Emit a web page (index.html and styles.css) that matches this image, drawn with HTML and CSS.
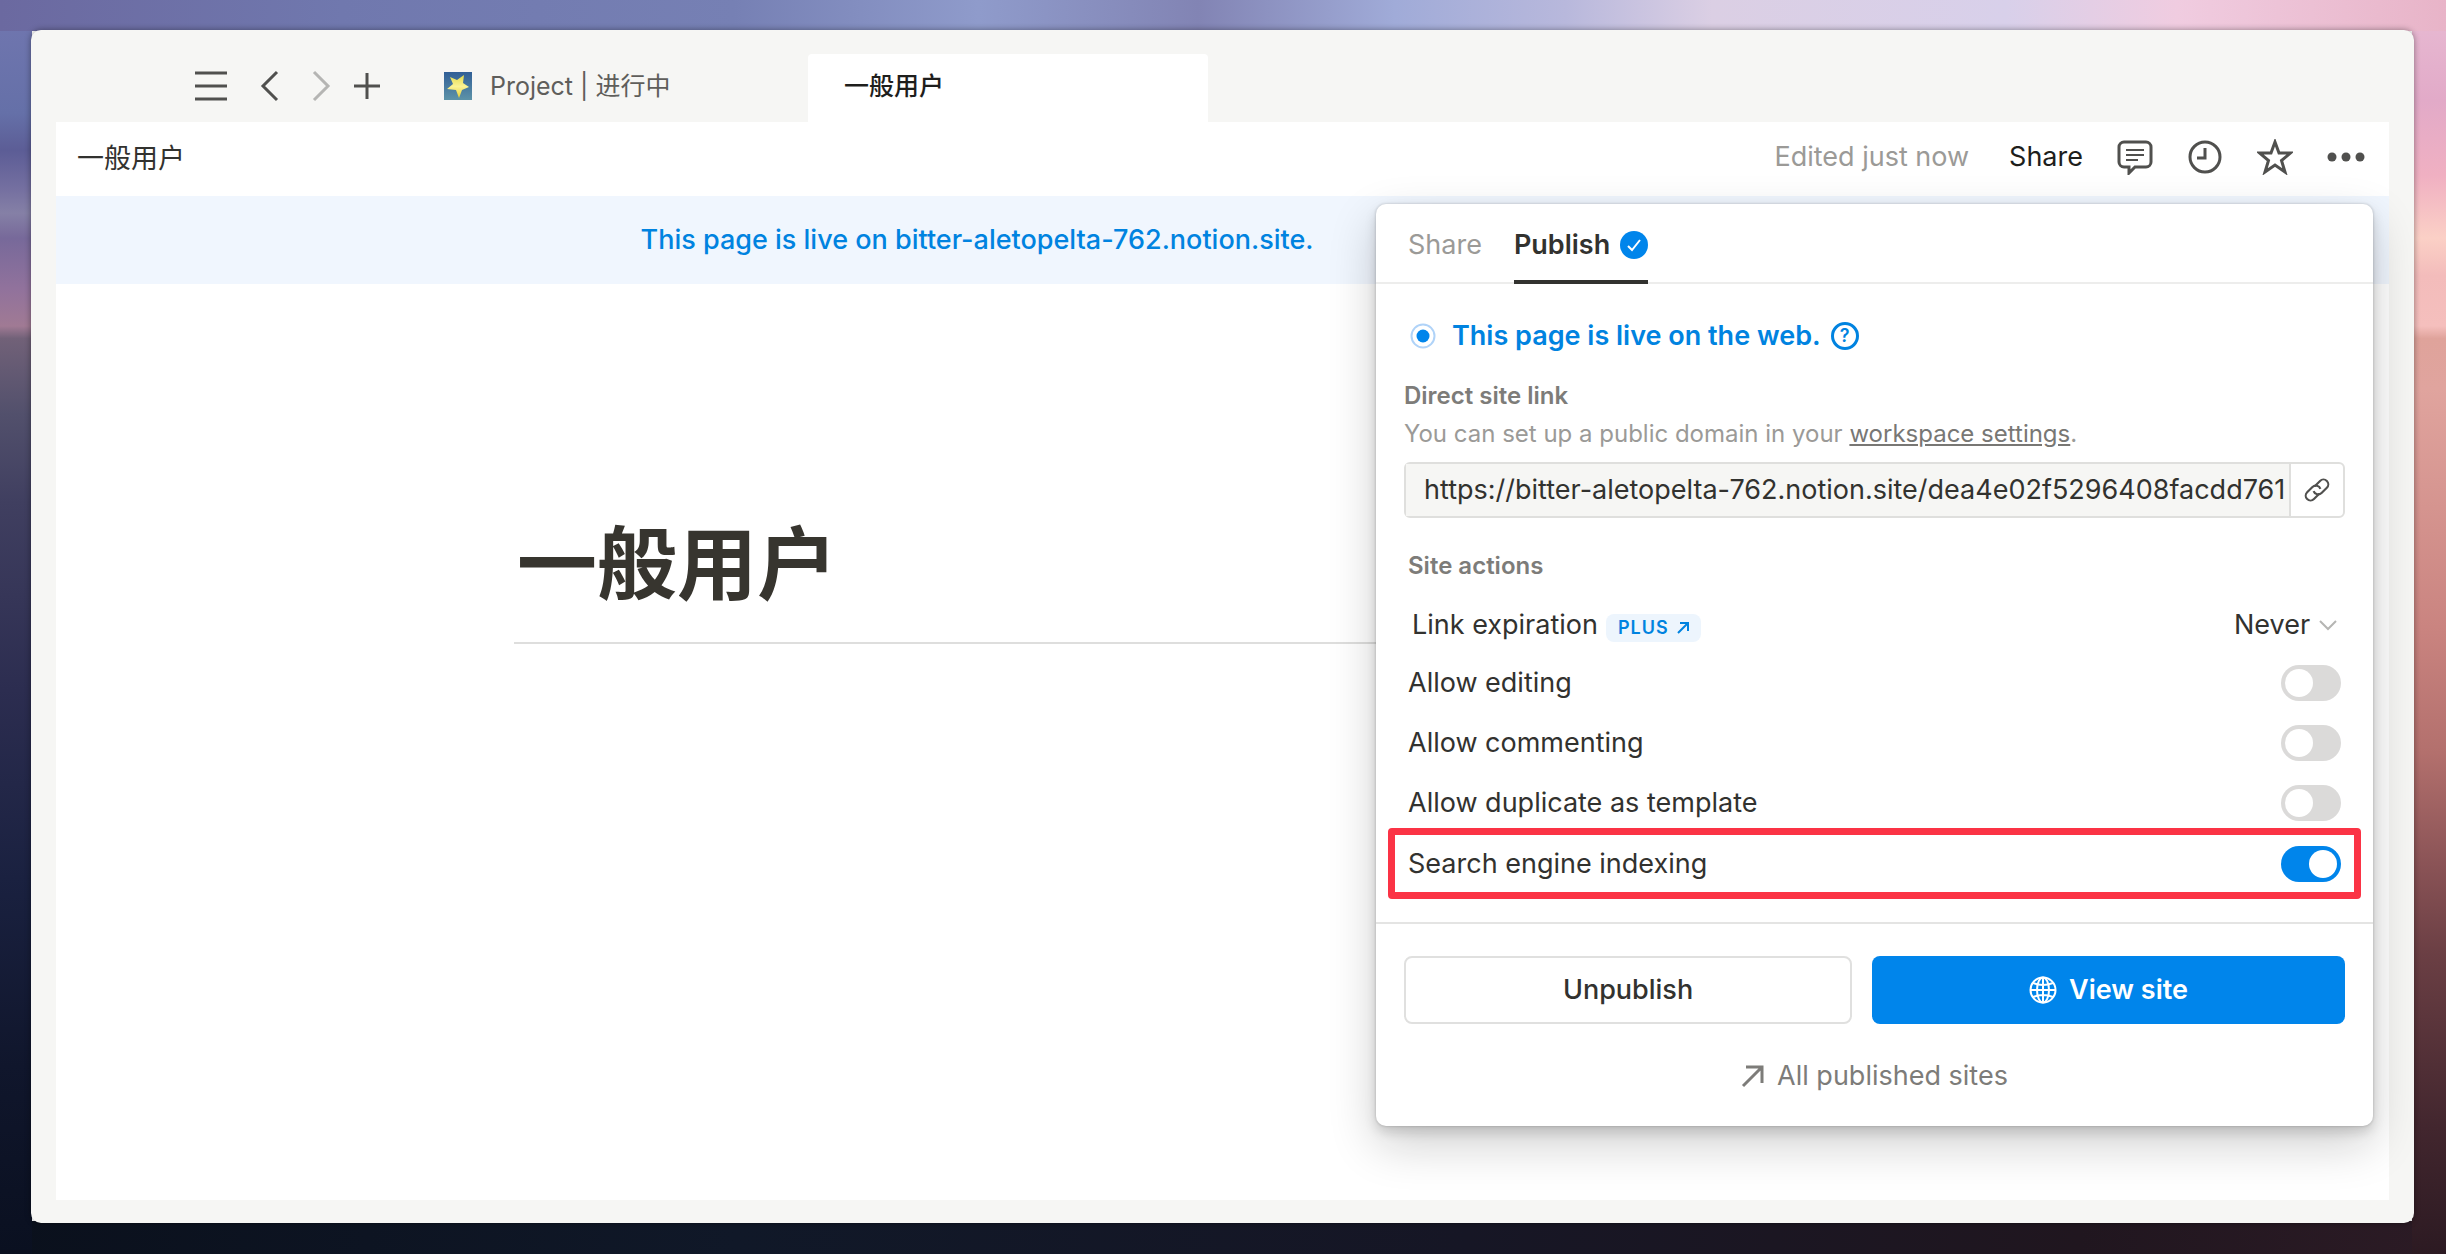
FILE: index.html
```html
<!DOCTYPE html>
<html lang="zh">
	<head>
		<title>一般用户</title>
		<meta charset="utf-8">
		<link rel="stylesheet" href="styles.css">
	</head>
	<body>
		<div class="window">
			<div class="topbar">
				<div class="nav">
					<button class="icon" aria-label="Menu"><svg width="36" height="36" viewBox="0 0 36 36"><path d="M2 5h32M2 18h32M2 31h32"/></svg></button>
					<button class="icon" aria-label="Back"><svg width="20" height="36" viewBox="0 0 20 36"><path d="M17 4L3 18l14 14"/></svg></button>
					<button class="icon off" aria-label="Forward"><svg width="20" height="36" viewBox="0 0 20 36"><path d="M3 4l14 14L3 32"/></svg></button>
					<button class="icon plusicon" aria-label="New tab"><svg width="28" height="36" viewBox="0 0 28 36"><path d="M1 18h26M14 5v26"/></svg></button>
				</div>
				<a class="tab" href="#">
					<svg width="28" height="28" viewBox="0 0 28 28">
						<defs>
							<linearGradient id="sky" x1="0" y1="0" x2="0" y2="1"><stop offset="0" stop-color="#315f96"/><stop offset="1" stop-color="#5d93a8"/></linearGradient>
							<linearGradient id="gold" x1="0" y1="0" x2="0" y2="1"><stop offset="0" stop-color="#e2d94c"/><stop offset=".5" stop-color="#fbf394"/><stop offset="1" stop-color="#e6cf35"/></linearGradient>
						</defs>
						<rect width="28" height="28" fill="url(#sky)"/>
						<path d="M20 3l-1 8 6 4-7 3-3 8-3-8-9-1 6-5-3-7 7 3z" fill="url(#gold)"/>
					</svg>
					Project | 进行中
				</a>
				<a class="tab current" href="#">一般用户</a>
			</div>
			<div class="page">
				<div class="header">
					<a class="crumb" href="#">一般用户</a>
					<span class="edited">Edited just now</span>
					<button class="share">Share</button>
					<button class="icon" aria-label="Comments"><svg width="36" height="36" viewBox="0 0 36 36"><path d="M7 3h22a5 5 0 0 1 5 5v15a5 5 0 0 1-5 5H18l-6 6v-6H7a5 5 0 0 1-5-5V8a5 5 0 0 1 5-5z"/><path class="thin" d="M9 11h18M9 16h18M9 21h12"/></svg></button>
					<button class="icon" aria-label="Updates"><svg width="36" height="36" viewBox="0 0 36 36"><circle cx="18" cy="18" r="15"/><path d="M18 9v10h-8"/></svg></button>
					<button class="icon" aria-label="Favorite"><svg width="36" height="36" viewBox="0 0 36 36"><path d="M18 3l4 11h11.500l-9 7.500 3.500 11.500-10-7-10 7 3.500-11.500-9-7.500H14z"/></svg></button>
					<button class="icon" aria-label="More"><svg width="38" height="36" viewBox="0 0 38 36"><g class="fill"><circle cx="5" cy="18" r="4.500"/><circle cx="19" cy="18" r="4.500"/><circle cx="33" cy="18" r="4.500"/></g></svg></button>
				</div>
				<div class="banner"><a href="#">This page is live on bitter-aletopelta-762.notion.site.</a></div>
				<div class="content">
					<h1>一般用户</h1>
				</div>

				<div class="popup">
					<div class="ptabs">
						<button class="ptab">Share</button>
						<button class="ptab active">Publish
							<svg width="28" height="28" viewBox="0 0 28 28"><circle cx="14" cy="14" r="14" fill="#0085eb"/><path d="M8 15l4 4 8-10" fill="none" stroke="#fff" stroke-width="2"/></svg>
						</button>
					</div>
					<div class="body">
						<div class="live">
							<svg width="26" height="26" viewBox="0 0 26 26"><circle cx="13" cy="13" r="11.500" fill="#fff" stroke="#b0d3f8" stroke-width="2"/><circle cx="13" cy="13" r="6.500" fill="#0085eb"/></svg>
							<span>This page is live on the web.</span>
							<button class="help" aria-label="Help">?</button>
						</div>
						<label class="small" for="url">Direct site link</label>
						<p class="note">You can set up a public domain in your <a href="#">workspace settings</a>.</p>
						<div class="link">
							<input id="url" type="text" readonly value="https://bitter-aletopelta-762.notion.site/dea4e02f5296408facdd761">
							<button aria-label="Copy link"><svg width="30" height="30" viewBox="0 0 28 28"><g transform="rotate(-45 14 14)"><path d="M13 18H6a4.500 4.500 0 0 1 0-9h7a4.500 4.500 0 0 1 4 6.500"/><path d="M15 10h7a4.500 4.500 0 0 1 0 9h-7a4.500 4.500 0 0 1-4-6.500"/></g></svg></button>
						</div>
						<h2 class="small">Site actions</h2>
						<div class="row expire">
							<label for="exp">Link expiration</label>
							<a class="plus" href="#">PLUS <svg width="12" height="12" viewBox="0 0 12 12"><path d="M1 11L11 1M3 1h8v8"/></svg></a>
							<select id="exp"><option>Never</option></select>
							<svg class="down" width="18" height="12" viewBox="0 0 18 12"><path d="M1 2l8 8 8-8"/></svg>
						</div>
						<div class="row"><label for="edit">Allow editing</label><input id="edit" class="switch" type="checkbox"></div>
						<div class="row"><label for="comment">Allow commenting</label><input id="comment" class="switch" type="checkbox"></div>
						<div class="row"><label for="dup">Allow duplicate as template</label><input id="dup" class="switch" type="checkbox"></div>
						<div class="row marked"><label for="seo">Search engine indexing</label><input id="seo" class="switch" type="checkbox" checked></div>
					</div>
					<div class="foot">
						<div class="buttons">
							<button class="btn">Unpublish</button>
							<button class="btn view">
								<svg width="28" height="28" viewBox="0 0 28 28"><circle cx="14" cy="14" r="12.500"/><ellipse cx="14" cy="14" rx="6" ry="12.500"/><path d="M14 1.500v25M1.500 14h25M4 7q10 4 20 0M4 21q10-4 20 0"/></svg>
								View site
							</button>
						</div>
						<a class="all" href="#"><svg width="24" height="24" viewBox="0 0 24 24"><path d="M2 22L21 3M5 3h16v16"/></svg>All published sites</a>
					</div>
				</div>
			</div>
		</div>
	</body>
</html>
```
FILE: styles.css
```css
* {
	box-sizing: border-box;
}
body {
	margin: 0;
	min-height: 100vh;
	padding: 30px 32px 31px 31px;
	display: flex;
	font-family: Inter, "Noto Sans CJK SC", sans-serif;
	font-size: 27px;
	line-height: 36px;
	color: #32322f;
	background:
		linear-gradient(90deg, #6b69a0, #7078ae 14%, #7680b4 30%, #8f9bcb 40%, #8284b4 49%, #a0abd8 57%, #b8b8dc 64%, #dbcfe4 70%, #d8d0ea 82%, #f0cce0 89%, #e8b4c8) no-repeat 0 0 / 100% 31px,
		linear-gradient(#7277b0, #6570a8 9%, #5c5d96 12%, #746fa0 15%, #8580a6 17%, #77699a 19%, #91729c 23%, #a07a94 26%, #716178 27%, #52506c 33%, #403f60 40%, #2c2d50 55%, #1a2140 70%, #10162c 85%, #0a1020) no-repeat 0 0 / 32px 100%,
		linear-gradient(#e8bcd4, #e2aac8 8%, #f0b0c2 14%, #fbd0c6 19%, #f3bcbb 22%, #f5bfbd 26%, #dfa39b 27%, #e0a49e 31%, #ca8480 50%, #b3706d 60%, #8a5356 69%, #6b3f44 76%, #42262e 90%, #2c1a22) no-repeat 100% 0 / 34px 100%,
		linear-gradient(90deg, #0a101c, #101828 30%, #161625 60%, #20161f 85%, #2c1b25) no-repeat 0 100% / 100% 33px;
}
button, input, select {
	font: inherit;
	color: inherit;
	margin: 0;
	padding: 0;
	border: 0;
	background: none;
}
a {
	color: inherit;
	text-decoration: none;
}
svg {
	display: block;
	flex: none;
}
.window {
	flex: 1;
	display: flex;
	flex-direction: column;
	padding: 24px 25px 23px;
	background: #f6f6f4;
	border-radius: 10px;
	box-shadow: 0 0 6px rgba(0, 0, 0, .4);
}
.topbar {
	display: flex;
	height: 68px;
}
.nav {
	display: flex;
	align-items: center;
	gap: 31px;
	width: 352px;
	padding-left: 137px;
	padding-bottom: 4px;
}
.icon svg {
	fill: none;
	stroke: #50504e;
	stroke-width: 3;
}
.icon.off svg {
	stroke: #b5b5b3;
}
.icon .thin {
	stroke-width: 2;
}
.icon .fill {
	fill: #50504e;
	stroke: none;
}
.plusicon {
	margin-left: -9px;
}
.tab {
	display: flex;
	align-items: center;
	gap: 18px;
	width: 400px;
	padding: 0 36px 4px;
	font-size: 25px;
	color: #5f5e5b;
}
.tab.current {
	background: #fff;
	color: #1e1e1c;
	font-weight: 500;
	border-radius: 4px 4px 0 0;
}
.page {
	position: relative;
	flex: 1;
	background: #fff;
}
.header {
	display: flex;
	align-items: center;
	gap: 34px;
	height: 74px;
	padding: 0 24px 4px 21px;
}
.crumb {
	margin-right: auto;
	padding-top: 3px;
}
.edited {
	margin-right: 6px;
	color: #9b9a97;
}
.share {
	color: #1e1e1c;
}
.banner {
	height: 88px;
	padding-right: 491px;
	line-height: 88px;
	font-weight: 500;
	text-align: center;
	color: #0083e0;
	background: #f0f6fe;
}
.content {
	padding: 220px 458px 0;
}
h1 {
	margin: 0;
	height: 140px;
	padding-left: 3px;
	font-size: 80px;
	line-height: 120px;
	color: #37352f;
	border-bottom: 2px solid #dededd;
}
.popup {
	position: absolute;
	top: 82px;
	right: 16px;
	width: 997px;
	background: #fff;
	border-radius: 10px;
	box-shadow: 0 0 2px 1px rgba(15, 15, 15, .1), 0 6px 12px rgba(15, 15, 15, .15), 0 18px 48px rgba(15, 15, 15, .2);
}
.ptabs {
	display: flex;
	gap: 32px;
	height: 80px;
	padding: 0 32px;
	border-bottom: 2px solid #ededec;
}
.ptab {
	display: flex;
	align-items: center;
	gap: 10px;
	height: 80px;
	padding-top: 6px;
	color: #9b9a97;
	border-bottom: 4px solid transparent;
}
.ptab.active {
	color: #32322f;
	font-weight: 600;
	border-bottom-color: #32322f;
}
.body {
	padding: 34px 28px 23px;
}
.live {
	display: flex;
	align-items: center;
	gap: 10px;
	padding-left: 6px;
	margin-bottom: 24px;
	font-weight: 600;
	color: #0083e0;
}
.live span {
	margin-left: 6px;
}
.help {
	width: 28px;
	height: 28px;
	border: 3px solid #0083e0;
	border-radius: 50%;
	font-size: 18px;
	line-height: 22px;
}
.small {
	display: block;
	margin: 0;
	font-size: 24px;
	font-weight: 600;
	color: #7d7c79;
}
.note {
	margin: 2px 0 10px;
	font-size: 24px;
	color: #9b9a97;
}
.note a {
	color: #787774;
	text-decoration: underline;
}
.link {
	display: flex;
	height: 56px;
	border: 2px solid #dfdfdd;
	border-radius: 6px;
	margin-bottom: 30px;
}
.link input {
	flex: 1;
	min-width: 0;
	padding-left: 18px;
	background: #f6f6f4;
}
.link button {
	width: 54px;
	padding-left: 11px;
	border-left: 2px solid #dfdfdd;
}
.link svg {
	fill: none;
	stroke: #50504e;
	stroke-width: 2;
}
h2.small {
	padding-left: 4px;
	margin-bottom: 13px;
}
.row {
	display: flex;
	align-items: center;
	justify-content: space-between;
	height: 60px;
	padding: 0 4px;
}
.expire {
	height: 56px;
	padding: 0 8px;
	gap: 8px;
}
.plus {
	display: flex;
	align-items: center;
	gap: 8px;
	margin-top: 5px;
	margin-right: auto;
	padding: 0 12px;
	font-size: 18px;
	font-weight: 600;
	line-height: 28px;
	letter-spacing: 1px;
	color: #0083e0;
	background: #edf5fd;
	border-radius: 8px;
}
.plus svg {
	fill: none;
	stroke: #0083e0;
	stroke-width: 2;
}
select {
	appearance: none;
}
.down {
	fill: none;
	stroke: #b5b5b3;
	stroke-width: 2;
}
.switch {
	appearance: none;
	width: 60px;
	height: 36px;
	padding: 4px;
	border-radius: 18px;
	background: #dbdad9;
}
.switch::before {
	content: "";
	display: block;
	width: 28px;
	height: 28px;
	border-radius: 50%;
	background: #fff;
}
.switch:checked {
	background: #0085eb;
}
.switch:checked::before {
	margin-left: 24px;
}
.marked {
	height: 71px;
	margin: -5px -16px 0;
	padding: 0 13px;
	border: 7px solid #fb3345;
	border-radius: 4px;
}
.foot {
	padding: 32px 28px;
	border-top: 2px solid #e4e4e3;
}
.buttons {
	display: flex;
	gap: 20px;
	margin-bottom: 34px;
}
.btn {
	flex: 446;
	height: 68px;
	border: 2px solid #e0e0df;
	border-radius: 8px;
	font-weight: 500;
}
.view {
	flex: 475;
	display: flex;
	align-items: center;
	justify-content: center;
	gap: 12px;
	border: 0;
	font-weight: 600;
	color: #fff;
	background: #0085eb;
}
.view svg {
	fill: none;
	stroke: #fff;
	stroke-width: 2;
}
.all {
	display: flex;
	align-items: center;
	justify-content: center;
	gap: 12px;
	color: #7d7c79;
}
.all svg {
	fill: none;
	stroke: #7d7c79;
	stroke-width: 3;
}
```
